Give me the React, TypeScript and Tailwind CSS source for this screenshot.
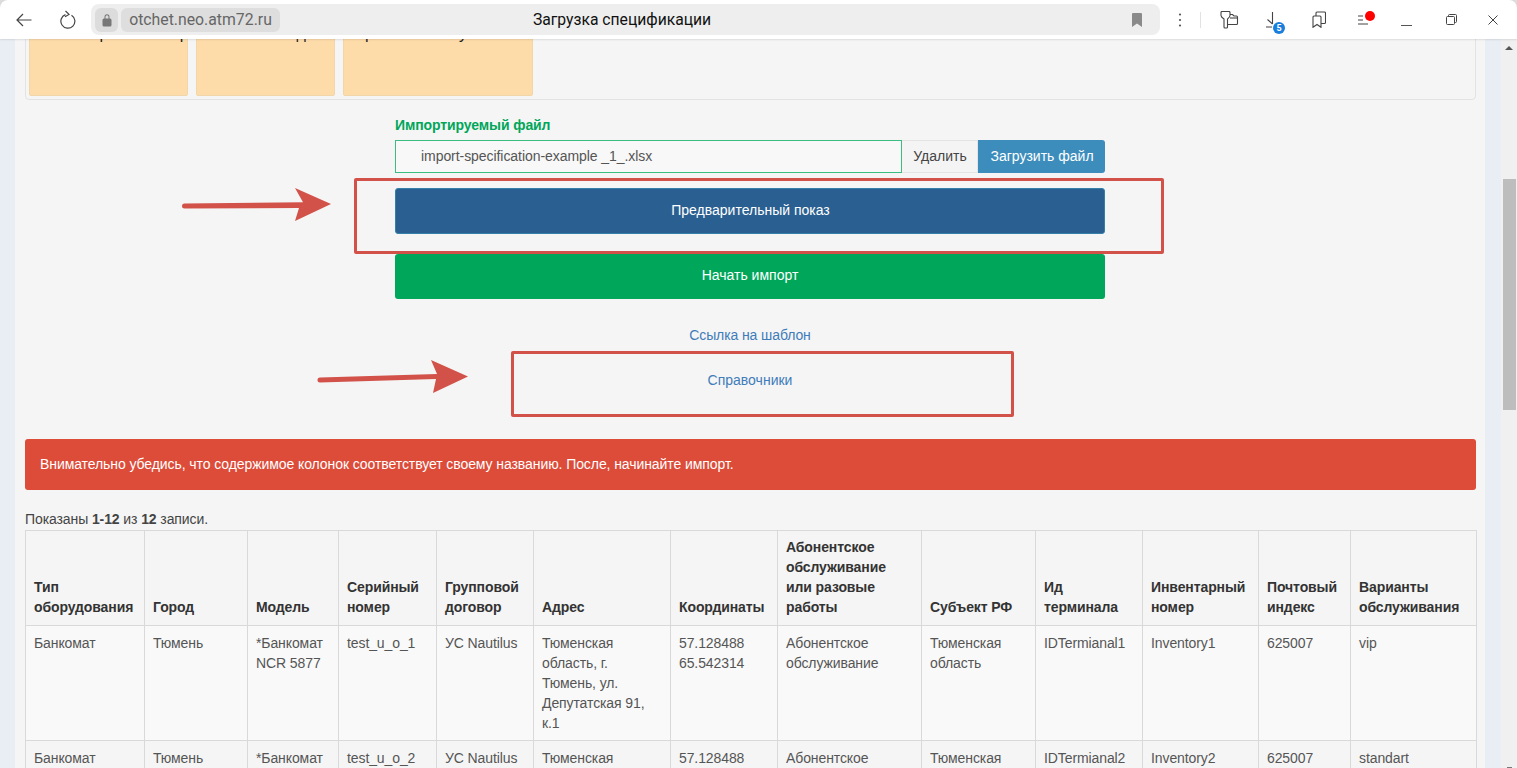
import React from 'react';

const columns = [
  { title: 'Тип оборудования', width: 'w-[119px]' },
  { title: 'Город', width: 'w-[103px]' },
  { title: 'Модель', width: 'w-[91px]' },
  { title: 'Серийный номер', width: 'w-[98px]' },
  { title: 'Групповой договор', width: 'w-[97px]' },
  { title: 'Адрес', width: 'w-[137px]' },
  { title: 'Координаты', width: 'w-[107px]' },
  { title: 'Абонентское обслуживание или разовые работы', width: 'w-[144px]' },
  { title: 'Субъект РФ', width: 'w-[114px]' },
  { title: 'Ид терминала', width: 'w-[107px]' },
  { title: 'Инвентарный номер', width: 'w-[116px]' },
  { title: 'Почтовый индекс', width: 'w-[92px]' },
  { title: 'Варианты обслуживания', width: 'w-[126px]' },
];

const makeRow = (n: number, plan: string) => [
  'Банкомат',
  'Тюмень',
  '*Банкомат NCR 5877',
  `test_u_o_${n}`,
  'УС Nautilus',
  'Тюменская область, г. Тюмень, ул. Депутатская 91, к.1',
  '57.128488 65.542314',
  'Абонентское обслуживание',
  'Тюменская область',
  `IDTermianal${n}`,
  `Inventory${n}`,
  '625007',
  plan,
];

const rows = [makeRow(1, 'vip'), makeRow(2, 'standart')];

const BrowserBar: React.FC = () => (
  <div className="relative z-10 flex h-[39px] shrink-0 items-center rounded-t-lg bg-white shadow-[0_1px_2px_rgba(0,0,0,0.1)] font-['Roboto',sans-serif]">
    <div className="flex w-[48px] justify-center">
      <svg width="16" height="14" viewBox="0 0 16 14" fill="none" stroke="#444" strokeWidth="1.2">
        <path d="M15.5 7H1M7 1 1 7l6 6" />
      </svg>
    </div>
    <div className="flex w-[40px] justify-center">
      <svg width="16" height="20" viewBox="0 0 16 20" fill="none" stroke="#444" strokeWidth="1.2">
        <path d="M5.5 4.6A7 7 0 1 0 11.5 5.2" />
        <path d="M5.5 1 9 4.4 5 6.8" />
      </svg>
    </div>
    <div className="relative ml-[3px] flex h-[31px] w-[1069px] items-center rounded-lg bg-[#eeeeee]">
      <div className="ml-[4px] flex h-[24px] w-[23px] items-center justify-center rounded-md bg-[#dcdcdc]">
        <svg width="10" height="14" viewBox="0 0 10 14" fill="#777">
          <path d="M2.5 6V3.8a2.5 2.5 0 0 1 5 0V6h-1V3.8a1.5 1.5 0 0 0-3 0V6z" />
          <rect x="0.5" y="5.5" width="9" height="8" rx="1.5" />
        </svg>
      </div>
      <div className="ml-[3px] flex h-[24px] w-[159px] items-center justify-center rounded-md bg-[#dedede] text-[15.8px] text-[#666]">
        otchet.neo.atm72.ru
      </div>
      <div className="absolute inset-0 flex items-center justify-center pr-[7px] text-[15.7px] text-[#111]">
        Загрузка спецификации
      </div>
      <svg className="ml-auto mr-[18px]" width="10" height="14" viewBox="0 0 10 14" fill="#8a8a8a">
        <path d="M0 1a1 1 0 0 1 1-1h8a1 1 0 0 1 1 1v13L5 10.5 0 14z" />
      </svg>
    </div>
    <div className="flex w-[40px] justify-center">
      <svg width="4" height="14" viewBox="0 0 4 14" fill="#555">
        <circle cx="2" cy="1.5" r="1.1" />
        <circle cx="2" cy="7" r="1.1" />
        <circle cx="2" cy="12.5" r="1.1" />
      </svg>
    </div>
    <div className="h-[16px] w-px bg-[#e2e2e2]" />
    <div className="flex w-[56px] justify-center">
      <svg width="19" height="18" viewBox="0 0 19 18" fill="none" stroke="#444" strokeWidth="1.1">
        <path d="M1 1.500C1 .9 1.400.5 2 .5h7c.6 0 1 .4 1 1v3c0 1.400-1.200 2.300-2.500 3.500v8c0 .6-.4 1-1 1H5c-.6 0-1-.4-1-1V8C2.200 6.800 1 5.900 1 4.500z" />
        <path d="M10 3.500h2.500l1.500 1.500h2.500c.6 0 1 .4 1 1v6.500c0 .6-.4 1-1 1H7.500" />
        <path d="M10 7h8" />
      </svg>
    </div>
    <div className="relative flex h-[39px] w-[32px] justify-center">
      <svg className="absolute left-[9px] top-[12px]" width="12" height="17" viewBox="0 0 12 17" fill="none" stroke="#444" strokeWidth="1.1">
        <path d="M6.5 0v12M1.5 7.500l5 4.500M0 15h6" />
      </svg>
      <div className="absolute left-[16px] top-[22px] flex h-[12px] w-[12px] items-center justify-center rounded-full bg-[#1a7fdc] text-[9px] font-bold leading-none text-white">
        5
      </div>
    </div>
    <div className="flex w-[60px] justify-center">
      <svg width="14" height="17" viewBox="0 0 14 17" fill="none" stroke="#444" strokeWidth="1.1">
        <path d="M1 6a1 1 0 0 1 1-1h6a1 1 0 0 1 1 1v10.300L5 13.500l-4 2.800z" />
        <path d="M4 5V2a1 1 0 0 1 1-1h7.500a1 1 0 0 1 1 1v9.500a1 1 0 0 1-1 1H9" />
      </svg>
    </div>
    <div className="relative flex h-[39px] w-[30px] justify-center">
      <svg className="absolute left-[9px] top-[15px]" width="10" height="10" viewBox="0 0 10 10" fill="none" stroke="#444" strokeWidth="1">
        <path d="M0 1h5M0 5h5M0 9h10" />
      </svg>
      <div className="absolute left-[16px] top-[11px] h-[10px] w-[10px] rounded-full bg-[#ff0000]" />
    </div>
    <div className="flex w-[54px] justify-center">
      <div className="mt-[11px] h-px w-[11px] bg-[#555]" />
    </div>
    <div className="flex w-[36px] justify-center">
      <svg width="11" height="11" viewBox="0 0 11 11" fill="none" stroke="#444" strokeWidth="1">
        <rect x="0.500" y="2.500" width="8" height="8" rx="1" />
        <path d="M2.500 2.500V1.500a1 1 0 0 1 1-1h6a1 1 0 0 1 1 1v6a1 1 0 0 1-1 1h-1" />
      </svg>
    </div>
    <div className="flex w-[48px] justify-center">
      <svg width="10" height="10" viewBox="0 0 10 10" fill="none" stroke="#444" strokeWidth="1">
        <path d="M0.500 0.500l9 9M9.500 0.500l-9 9" />
      </svg>
    </div>
  </div>
);

const UploadForm: React.FC = () => (
  <div className="ml-[370px] w-[710px]">
    <div className="mt-[15px] text-sm font-bold leading-5 tracking-[-0.1px] text-[#00a65a]">Импортируемый файл</div>
    <div className="mt-[5px] flex h-[33px]">
      <div className="flex flex-1 items-center border border-[#3cbc80] bg-[#f8f8f8] pb-px pl-[25px] text-sm tracking-[-0.06px] text-[#555]">
        import-specification-example _1_.xlsx
      </div>
      <div className="flex w-[76px] items-center justify-center border border-[#e4e4e4] border-l-0 bg-[#f4f4f4] pb-px pl-px text-sm text-[#444]">
        Удалить
      </div>
      <div className="flex w-[127px] items-center justify-center rounded-r-[3px] bg-[#3c8dbc] pb-px pl-px text-sm text-white">
        Загрузить файл
      </div>
    </div>
    <div className="mt-[15px] flex h-[46px] items-center justify-center rounded-[3px] border border-[#367fa9] bg-[#2a6091] pb-[2px] pl-px text-sm text-white">
      Предварительный показ
    </div>
    <div className="mt-[20px] flex h-[45px] items-center justify-center rounded-[3px] bg-[#00a65a] pb-[3px] text-sm text-white">
      Начать импорт
    </div>
    <div className="mt-[26px] text-center text-sm leading-5 tracking-[-0.1px] text-[#3f7cba]">Ссылка на шаблон</div>
    <div className="mt-[25px] text-center text-sm leading-5 text-[#3f7cba]">Справочники</div>
  </div>
);

const Annotations: React.FC = () => (
  <div className="pointer-events-none absolute inset-0 z-[5]">
    <div className="absolute left-[354px] top-[178px] h-[76px] w-[810px] rounded-[2px] border-[3px] border-[#d2524a]" />
    <div className="absolute left-[511px] top-[351px] h-[66px] w-[503px] rounded-[2px] border-[3px] border-[#d2524a]" />
    <svg className="absolute left-[175px] top-[180px]" width="165" height="50" viewBox="0 0 165 50" fill="#d2524a">
      <path d="M9.500 23.500 128 22.200 120 8 156 24 120 41 124 28 9.500 28.500a2.500 2.500 0 0 1 0-5z" />
    </svg>
    <svg className="absolute left-[310px] top-[355px]" width="165" height="45" viewBox="0 0 165 45" fill="#d2524a">
      <path d="M10 22.500 127 19 121 5 158 21.500 123 38 126 24 10 27.500a2.500 2.500 0 0 1 0-5z" />
    </svg>
  </div>
);

const App: React.FC = () => {
  return (
    <div className="relative flex h-[768px] w-[1517px] flex-col overflow-hidden bg-[#dcdcdc] font-['Liberation_Sans',sans-serif]">
      <BrowserBar />
      <div className="flex min-h-0 flex-1">
        <div className="w-[15px] shrink-0 bg-[#e9eef5]" />
        <main className="w-[1470px] shrink-0 overflow-hidden bg-[#f5f5f5] pl-[10px] pr-[9px]">
          <div className="-mt-[63px] flex gap-[8px] rounded border border-[#e3e3e3] p-[3px]">
            {[
              { text: 'Инвентарный номер', width: 'w-[159px]', shift: 'pl-[7px]' },
              { text: 'Почтовый индекс', width: 'w-[139px]', shift: '' },
              { text: 'Варианты обслуживания', width: 'w-[190px]', shift: '' },
            ].map((card) => (
              <div
                key={card.text}
                className={`${card.width} ${card.shift} h-[116px] whitespace-nowrap rounded-[2px] border border-[#f0d6a8] bg-[#fedcaa] pt-[41px] text-center text-base leading-6 text-[#222]`}
              >
                {card.text}
              </div>
            ))}
          </div>
          <UploadForm />
          <div className="mt-[49px] flex h-[51px] items-center rounded-[3px] bg-[#dd4b39] px-[15px] pb-px text-sm tracking-[-0.08px] text-white">
            Внимательно убедись, что содержимое колонок соответствует своему названию. После, начинайте импорт.
          </div>
          <div className="mt-[19px] text-sm leading-5 tracking-[-0.1px] text-[#444]">
            Показаны <b>1-12</b> из <b>12</b> записи.
          </div>
          <table className="mt-px w-[1451px] table-fixed border-collapse text-sm leading-5 tracking-[-0.1px]">
            <colgroup>
              {columns.map((col) => (
                <col key={col.title} className={col.width} />
              ))}
            </colgroup>
            <thead>
              <tr>
                {columns.map((col) => (
                  <th key={col.title} className="border border-[#d9d9d9] px-2 pb-2 pt-[6px] text-left align-bottom font-bold text-[#333]">
                    {col.title}
                  </th>
                ))}
              </tr>
            </thead>
            <tbody>
              {rows.map((row, i) => (
                <tr key={i} className={i % 2 === 0 ? 'bg-[#f9f9f9]' : ''}>
                  {row.map((cell, j) => (
                    <td key={j} className="border border-[#d9d9d9] px-2 pb-[7px] pt-[7px] align-top text-[#555]">
                      {cell}
                    </td>
                  ))}
                </tr>
              ))}
            </tbody>
          </table>
        </main>
        <div className="w-[16px] shrink-0 bg-[#e9eef5]" />
        <div className="flex w-[16px] shrink-0 flex-col items-center bg-[#f0f0f0]">
          <div className="mt-[7px] h-0 w-0 border-x-[4px] border-b-[4px] border-x-transparent border-b-[#555]" />
          <div className="mt-[129px] h-[231px] w-[13px] bg-[#bdbdbd]" />
          <div className="mt-auto h-px w-[5px] bg-[#777]" />
        </div>
      </div>
      <Annotations />
    </div>
  );
};

export default App;
